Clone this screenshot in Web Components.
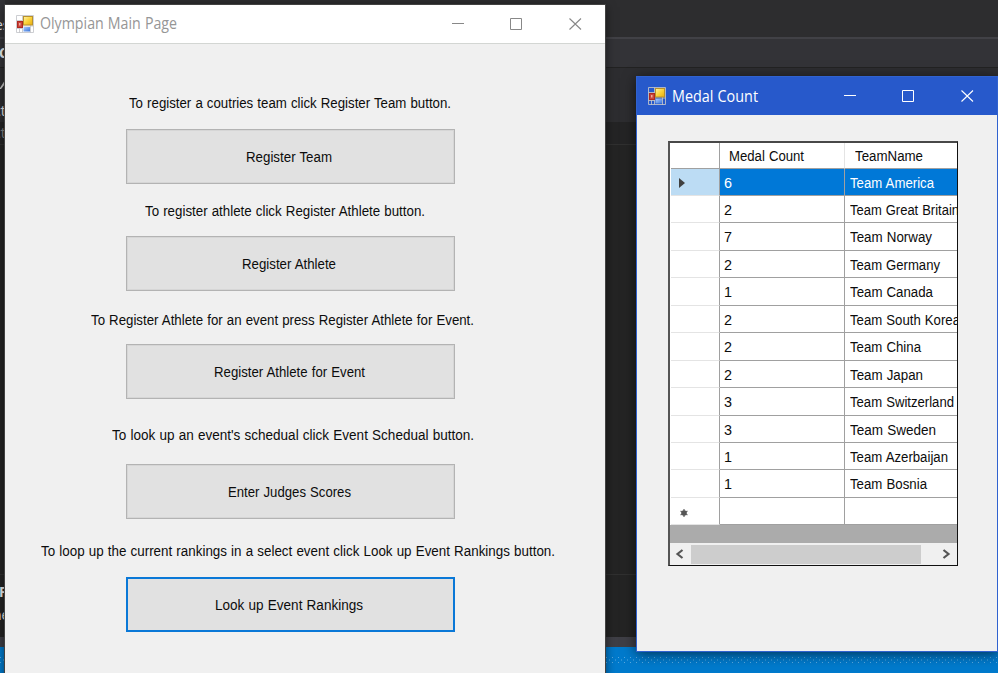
<!DOCTYPE html>
<html lang="en">
<head>
<meta charset="utf-8">
<title>Olympian</title>
<style>
html,body{margin:0;width:998px;height:673px;overflow:hidden;background:#252526}
body{font-family:"Liberation Sans",Arial,sans-serif;font-size:15.5px;color:#0c0c0c}
</style>
</head>
<body>
<desk-top>
  <ide-backdrop></ide-backdrop>
  <form-window class="main" caption="Olympian Main Page" cap-width="137">
    <menu-step gap="48" indent="124" width="322" label="To register a coutries team click Register Team button." button="Register Team" bw="86" bgap="17"></menu-step>
    <menu-step gap="16" indent="140" width="280" label="To register athlete click Register Athlete button." button="Register Athlete" bw="94" bgap="16"></menu-step>
    <menu-step gap="18" indent="86" width="383" label="To Register Athlete for an event press Register Athlete for Event." button="Register Athlete for Event" bw="151" bgap="15"></menu-step>
    <menu-step gap="25" indent="107" width="362" label="To look up an event's schedual click Event Schedual button." button="Enter Judges Scores" bw="123" bgap="20"></menu-step>
    <menu-step gap="21" indent="36" width="514" label="To loop up the current rankings in a select event click Look up Event Rankings button." button="Look up Event Rankings" bw="148" bgap="17" focused></menu-step>
  </form-window>
  <form-window class="medals" active caption="Medal Count" cap-width="86">
    <medal-grid></medal-grid>
  </form-window>
</desk-top>
<script>
const define = (name, html, init) => customElements.define(name, class extends HTMLElement {
  connectedCallback() {
    if (this.shadowRoot) return;
    this.attachShadow({mode: "open"}).innerHTML = typeof html === "function" ? html(this) : html;
    if (init) init(this);
  }
});

/* One line of text condensed horizontally to the given width. */
define("fit-text", `<style>:host{display:block;white-space:pre;line-height:18px}span{display:inline-block;transform-origin:0 0;word-spacing:.5px}</style><span></span>`, el => {
  const s = el.shadowRoot.querySelector("span");
  s.textContent = el.getAttribute("text");
  const w = +el.getAttribute("width");
  if (w) {
    const own = s.getBoundingClientRect().width;
    s.style.transform = `scaleX(${w / own})`;
    s.style.marginRight = w - own + "px";
  }
});

define("desk-top", `<style>
:host{display:block;position:relative;width:998px;height:673px;overflow:hidden}
::slotted(.main){position:absolute;left:5px;top:5px;width:600px;height:680px;box-shadow:0 0 0 1px #414141,0 2px 10px #0009}
::slotted(.medals){position:absolute;left:636px;top:76px;width:362px;height:576px;box-shadow:0 2px 12px #0009}
</style><slot></slot>`);

define("ide-backdrop", `<style>
:host{display:flex;flex-direction:column;width:998px;height:673px;color:#eee;font:14px/18px "Open Sans",sans-serif}
div{box-sizing:border-box;overflow:hidden;flex:none;white-space:nowrap}
.a{height:37px;background:linear-gradient(90deg,#333337 5px,#2d2d2f 5px);padding-top:16px}
.b{height:31px;background:#333337;border-top:2px solid #414146;border-bottom:1px solid #222;font-weight:bold;padding-top:5px}
.c{height:54px;background:#2d2d30;padding-top:10px}
.d{height:23px;background:#242425;border-bottom:1px solid #303030;color:#888;padding-top:2px}
.e{height:429px;background:#242424}
.f{height:63px;background:#242424;border-top:1px solid #303030;padding-top:8px}
.g{height:10px;background:#3f3f46}
.h{height:26px;background:#007acc;padding-top:10px}
svg{display:block}
.t{display:block;width:12px}
</style>
<div class="a"><span class="t" style="text-indent:-5px">es</span></div><div class="b"><span class="t" style="text-indent:-1px">C</span></div>
<div class="c"><svg width="5" height="11"><path d="M0 10L5 2V6L1 11H0Z" fill="#c8c8c8"/></svg><span class="t" style="margin-top:13px;text-indent:-6px">ct</span></div>
<div class="d"><span class="t" style="text-indent:-6px">ct</span></div><div class="e"></div>
<div class="f"><b class="t" style="text-indent:-1px">F</b><span class="t" style="margin-top:5px;text-indent:-7px">ne</span></div><div class="g"></div>
<div class="h"><svg width="998" height="6"><defs><pattern id="p" width="6" height="6" patternUnits="userSpaceOnUse"><path d="M0 0h1v1h-1zM3 2.500h1v1h-1zM0 5h1v1h-1z" fill="#59a8de"/></pattern></defs><rect width="998" height="6" fill="url(#p)"/></svg></div>`);

define("form-icon", `<style>:host{display:block;width:18px;height:18px}svg{display:block}</style>
<svg width="18" height="18" viewBox="0 0 18 18"><defs>
<linearGradient id="y" x2="1" y2="1"><stop stop-color="#fff3a8"/><stop offset=".5" stop-color="#fbd33a"/><stop offset="1" stop-color="#e8ac10"/></linearGradient>
<linearGradient id="b" x2="1" y2="1"><stop stop-color="#a9cbff"/><stop offset="1" stop-color="#3973d8"/></linearGradient></defs>
<path d="M.5.5h17v17H.5zM.5 5.500h6M.5 13.500h6M7 11h10.500M6.500.5v17M14.500 10v8M3.500 13v5" fill="none" stroke="#c4c6ca" stroke-opacity=".85"/>
<rect x="1.500" y="6.500" width="5" height="6" fill="#c9443a" stroke="#b0281f"/><rect x="3" y="8" width="1.500" height="2.500" fill="#f0a99c"/>
<rect x="7.500" y="1.500" width="9" height="8.500" fill="url(#y)" stroke="#b8912c"/>
<rect x="7.500" y="12" width="6.500" height="4.500" fill="url(#b)"/></svg>`);

define("form-window", el => {
  const on = el.hasAttribute("active");
  return `<style>
:host{display:flex;flex-direction:column;box-sizing:border-box;background:#f0f0f0;${on ? "border:1px solid #3062cf;" : ""}}
header{display:flex;align-items:center;box-sizing:border-box;flex:none;height:${on ? 38 : 39}px;padding-left:11px;background:${on ? "#2759cb" : "#fff"};color:${on ? "#fff" : "#969696"};${on ? "" : "border-bottom:1px solid #d3d6d3;"}}
fit-text{font:16px/20px "Open Sans","Noto Sans",sans-serif;line-height:20px;margin:0 0 ${on ? 1 : 2}px 6px;flex:1}
svg{display:block;flex:none;margin-right:23px}
main{display:block;flex:1}
</style><header><form-icon></form-icon><fit-text text="${el.getAttribute("caption")}" width="${el.getAttribute("cap-width")}"></fit-text>
<svg width="130" height="12" viewBox="0 0 130 12" fill="none" stroke="${on ? "#fff" : "#888"}"><path d="M0 5.500H12M58.500.5H69.500V11.500H58.500Z"/><path d="M117.500.5L129 11.500M129 .5L117.500 11.500" stroke-width="1.100"/></svg></header><main><slot></slot></main>`;
});

define("menu-step", el => {
  const a = n => el.getAttribute(n), f = el.hasAttribute("focused");
  return `<style>
:host{display:block;padding-top:${a("gap")}px}
.label{padding:2px 0 0 ${a("indent")}px}
button{display:flex;box-sizing:border-box;align-items:center;justify-content:center;width:329px;height:55px;margin:${a("bgap")}px 0 0 121px;padding:0 3px 0 0;border:${f ? "2px solid #0a78d7" : "1px solid #b3b3b3"};${f ? "" : "box-shadow:inset 0 0 0 1px #d6d6d6;"}border-radius:0;background:#e1e1e1;color:inherit;font:inherit}
</style><fit-text class="label" text="${a("label")}" width="${a("width")}"></fit-text><button><fit-text text="${a("button")}" width="${a("bw")}"></fit-text></button>`;
});

const teams = [[6,"America",84],[2,"Great Britain",109],[7,"Norway",82],[2,"Germany",90],[1,"Canada",83],[2,"South Korea",110],[2,"China",71],[2,"Japan",73],[3,"Switzerland",104],[3,"Sweden",86],[1,"Azerbaijan",98],[1,"Bosnia",77]];
define("medal-grid", () => `<style>
:host{display:flex;flex-direction:column;box-sizing:border-box;width:290px;height:425px;margin:26px 0 0 31px;border:solid;border-width:2px 1px 1px 2px;border-color:#484848 #111 #111 #555;background:#ababab;overflow:hidden}
.row{display:grid;grid-template-columns:50px 125px 1fr;flex:none;height:27.460px;background:#fff}
.row>*{box-sizing:border-box;border-right:1px solid #a0a0a0;border-bottom:1px solid #a0a0a0;padding:5px 0 0 5px;overflow:hidden;min-width:0}
.row>:nth-child(2){padding-left:4px}
.row>:last-child{border-right:0}
.row>:first-child{border-bottom-color:#e4e4e4;margin-left:1px;padding:8px 0 0 7px}
.head{height:25.500px}
.head>*{padding:4px 0 0 9px!important;border-bottom-color:#a0a0a0!important}
.head>:nth-child(2){border-right-color:#e4e4e4}
.head>:nth-child(3){padding-left:10px!important}
.sel>*{background:#0078d7;color:#fff}.sel>:first-child{background:#bcdcf4}
.bar{display:flex;align-items:center;box-sizing:border-box;flex:none;height:22px;margin-top:auto;background:#f0f0f0;padding-left:5px}
.thumb{width:230px;height:19px;background:#cdcdcd;margin:0 21px 0 7px}
svg{display:block}
</style>
<div class="row head"><span></span><fit-text text="Medal Count" width="75"></fit-text><fit-text text="TeamName" width="68"></fit-text></div>
${teams.map(([n,t,w],i)=>`<div class="row${i?"":" sel"}"><span>${i?"":`<svg width="8" height="12"><path d="M1 1L7 6L1 11Z" fill="#404040"/></svg>`}</span><fit-text text="${n}" width="8"></fit-text><fit-text text="Team ${t}" width="${w}"></fit-text></div>`).join("")}
<div class="row"><span style="padding:11px 0 0 9px"><svg width="8" height="8" stroke="#707070" stroke-width="1.300"><path d="M4 0v8M.5 2l7 4M.5 6l7-4"/><circle cx="4" cy="4" r="2.800" fill="#555" stroke="none"/></svg></span><span></span><span></span></div>
<div class="bar"><svg width="9" height="10" fill="none" stroke="#555" stroke-width="2.200"><path d="M7.500 1L2.500 5L7.500 9"/></svg><div class="thumb"></div><svg width="9" height="10" fill="none" stroke="#555" stroke-width="2.200"><path d="M1.500 1L6.500 5L1.500 9"/></svg></div>`);
</script>
</body>
</html>
